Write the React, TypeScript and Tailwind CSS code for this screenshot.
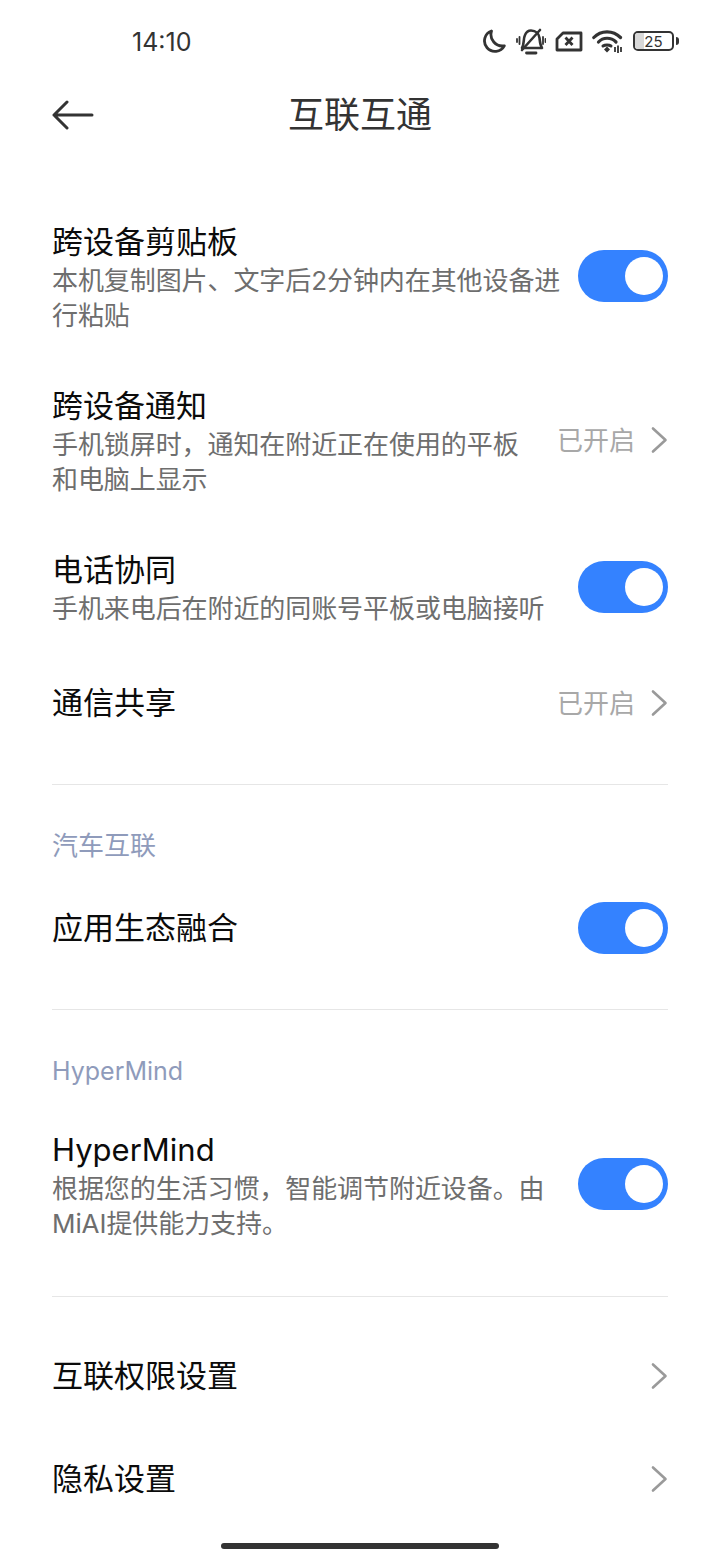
const FONT = "font-['Inter','Noto_Sans_CJK_SC',sans-serif]";

function Toggle() {
  return (
    <div className="flex h-[52px] w-[90px] shrink-0 items-center justify-end rounded-full bg-[#3482ff] pr-[5px]">
      <div className="h-[38px] w-[38px] rounded-full bg-white" />
    </div>
  );
}

function Chevron() {
  return (
    <svg width="18" height="28" viewBox="0 0 18 28" fill="none" className="shrink-0">
      <path d="M3 2.5 L15.5 14 L3 25.5" stroke="#9a9a9a" strokeWidth="2.6" strokeLinecap="round" strokeLinejoin="round" />
    </svg>
  );
}

function Row({ title, desc, right, height }: { title: string; desc?: string[]; right?: React.ReactNode; height?: string }) {
  return (
    <div className={`flex items-center justify-between ${desc ? 'py-[26px]' : height}`}>
      <div className={`min-w-0 ${desc ? 'translate-y-[1px]' : ''}`}>
        <div className={`text-[31px] text-[#0b0b0b] ${desc ? 'leading-[42px]' : 'leading-[40px]'}`}>{title}</div>
        {desc && desc.map((line) => (
          <div key={line} className="whitespace-nowrap text-[26px] leading-[35px] tracking-[-0.08px] text-[#6e6e6e]">{line}</div>
        ))}
      </div>
      {right}
    </div>
  );
}

function Value({ text }: { text?: string }) {
  return (
    <div className="flex shrink-0 items-center">
      {text && <span className="mr-[15px] text-[26px] leading-[35px] text-[#a8a8a8]">{text}</span>}
      <Chevron />
    </div>
  );
}

function StatusIcons() {
  return (
    <div className="flex items-center">
      {/* moon */}
      <svg width="24" height="24" viewBox="0 0 24 24" fill="none">
        <path d="M9.500 2 A10.500 10.500 0 1 0 22.300 16.800 A11.500 11.500 0 0 1 9.500 2 Z" stroke="#333" strokeWidth="2.8" strokeLinejoin="round" />
      </svg>
      {/* muted bell with vibrate */}
      <svg width="30" height="27" viewBox="0 0 30 27" fill="none" className="ml-[10px]">
        <path d="M6 20 C8.500 16 7 11 9 7 C10.500 3.500 13 2.500 15 2.500 C20 2.500 23 6 23.500 10 C24 14 24 17 26 20 Z" stroke="#333" strokeWidth="2.6" strokeLinejoin="round" />
        <path d="M10.500 25 H20" stroke="#333" strokeWidth="2.8" strokeLinecap="round" />
        <path d="M6 22 L24 2" stroke="#333" strokeWidth="2.6" strokeLinecap="round" />
        <path d="M3.500 9 V16 M1 11 V14 M27 9 V16 M29.500 11 V14" stroke="#333" strokeWidth="1.8" strokeLinecap="round" />
      </svg>
      {/* sim with x */}
      <svg width="28" height="21" viewBox="0 0 28 21" fill="none" className="ml-[9px]">
        <path d="M8 2 H26 V19 H2 V8 Z" stroke="#333" strokeWidth="2.8" strokeLinejoin="round" />
        <path d="M10.500 6.500 L17.500 14 M17.500 6.500 L10.500 14" stroke="#333" strokeWidth="2.8" />
      </svg>
      {/* wifi */}
      <svg width="31" height="24" viewBox="0 0 31 24" fill="none" className="ml-[9px]">
        <path d="M1.800 8.500 C9 1 21 1 28.500 8.500" stroke="#333" strokeWidth="3.200" strokeLinecap="round" />
        <path d="M6.500 13 C11 8 19 8 24 13" stroke="#333" strokeWidth="3.200" strokeLinecap="round" />
        <path d="M11 17 C13 15.500 17 15.500 19 17" stroke="#333" strokeWidth="3" strokeLinecap="round" />
        <path d="M12 20.500 L15 17.500 L18 20.500 L15 23.500 Z" fill="#333" />
        <path d="M23 18 V23 M26 16.500 V24 M29 18 V23" stroke="#333" strokeWidth="1.800" />
      </svg>
      {/* battery */}
      <div className="ml-[10px] flex items-center">
        <div className="relative flex h-[20px] w-[41px] items-center justify-center overflow-hidden rounded-[5px] border-2 border-[#333]">
          <div className="absolute inset-y-0 left-0 w-[9px] bg-[#d8d8d8]" />
          <span className="relative text-[15px] leading-none text-[#333]">25</span>
        </div>
        <div className="ml-[2px] h-[8px] w-[3px] rounded-r-sm bg-[#333]" />
      </div>
    </div>
  );
}

export default function App() {
  return (
    <div className={`${FONT} h-[1560px] w-[720px] overflow-hidden bg-white`}>
      {/* Status bar */}
      <div className="flex h-[82px] items-center justify-between pl-[132px] pr-[41px]">
        <span className="mt-[3px] text-[25px] text-[#333]">14:10</span>
        <StatusIcons />
      </div>

      {/* Header */}
      <div className="relative flex h-[66px] items-center justify-center">
        <svg width="42" height="30" viewBox="0 0 42 30" fill="none" className="absolute left-[52px] top-[18px]">
          <path d="M15 2 L2 15 L15 28 M2 15 H40" stroke="#333" strokeWidth="3" strokeLinecap="round" strokeLinejoin="round" />
        </svg>
        <h1 className="text-[36px] font-normal text-[#333]">互联互通</h1>
      </div>

      <div className="px-[52px] pt-[46px]">
        <Row title="跨设备剪贴板" desc={['本机复制图片、文字后2分钟内在其他设备进', '行粘贴']} right={<Toggle />} />
        <Row title="跨设备通知" desc={['手机锁屏时，通知在附近正在使用的平板', '和电脑上显示']} right={<Value text="已开启" />} />
        <Row title="电话协同" desc={['手机来电后在附近的同账号平板或电脑接听']} right={<Toggle />} />
        <Row title="通信共享" right={<Value text="已开启" />} height="h-[104px]" />

        <div className="mt-[29px] h-px bg-[#e6e6e6]" />
        <div className="pt-[43px] pb-[14px] text-[26px] leading-[35px] text-[#8f9bbb]">汽车互联</div>
        <Row title="应用生态融合" right={<Toggle />} height="h-[102px]" />

        <div className="mt-[30px] h-px bg-[#e6e6e6]" />
        <div className="pt-[44px] pb-[13px] text-[25px] leading-[35px] text-[#8f9bbb]">HyperMind</div>
        <Row title="HyperMind" desc={['根据您的生活习惯，智能调节附近设备。由', 'MiAI提供能力支持。']} right={<Toggle />} />

        <div className="mt-[30px] h-px bg-[#e6e6e6]" />
        <div className="pt-[27px]">
          <Row title="互联权限设置" right={<Value />} height="h-[103px]" />
          <Row title="隐私设置" right={<Value />} height="h-[103px]" />
        </div>
      </div>

      {/* Home indicator */}
      <div className="mx-auto mt-[13px] h-[6px] w-[278px] rounded-full bg-[#333]" />
    </div>
  );
}
